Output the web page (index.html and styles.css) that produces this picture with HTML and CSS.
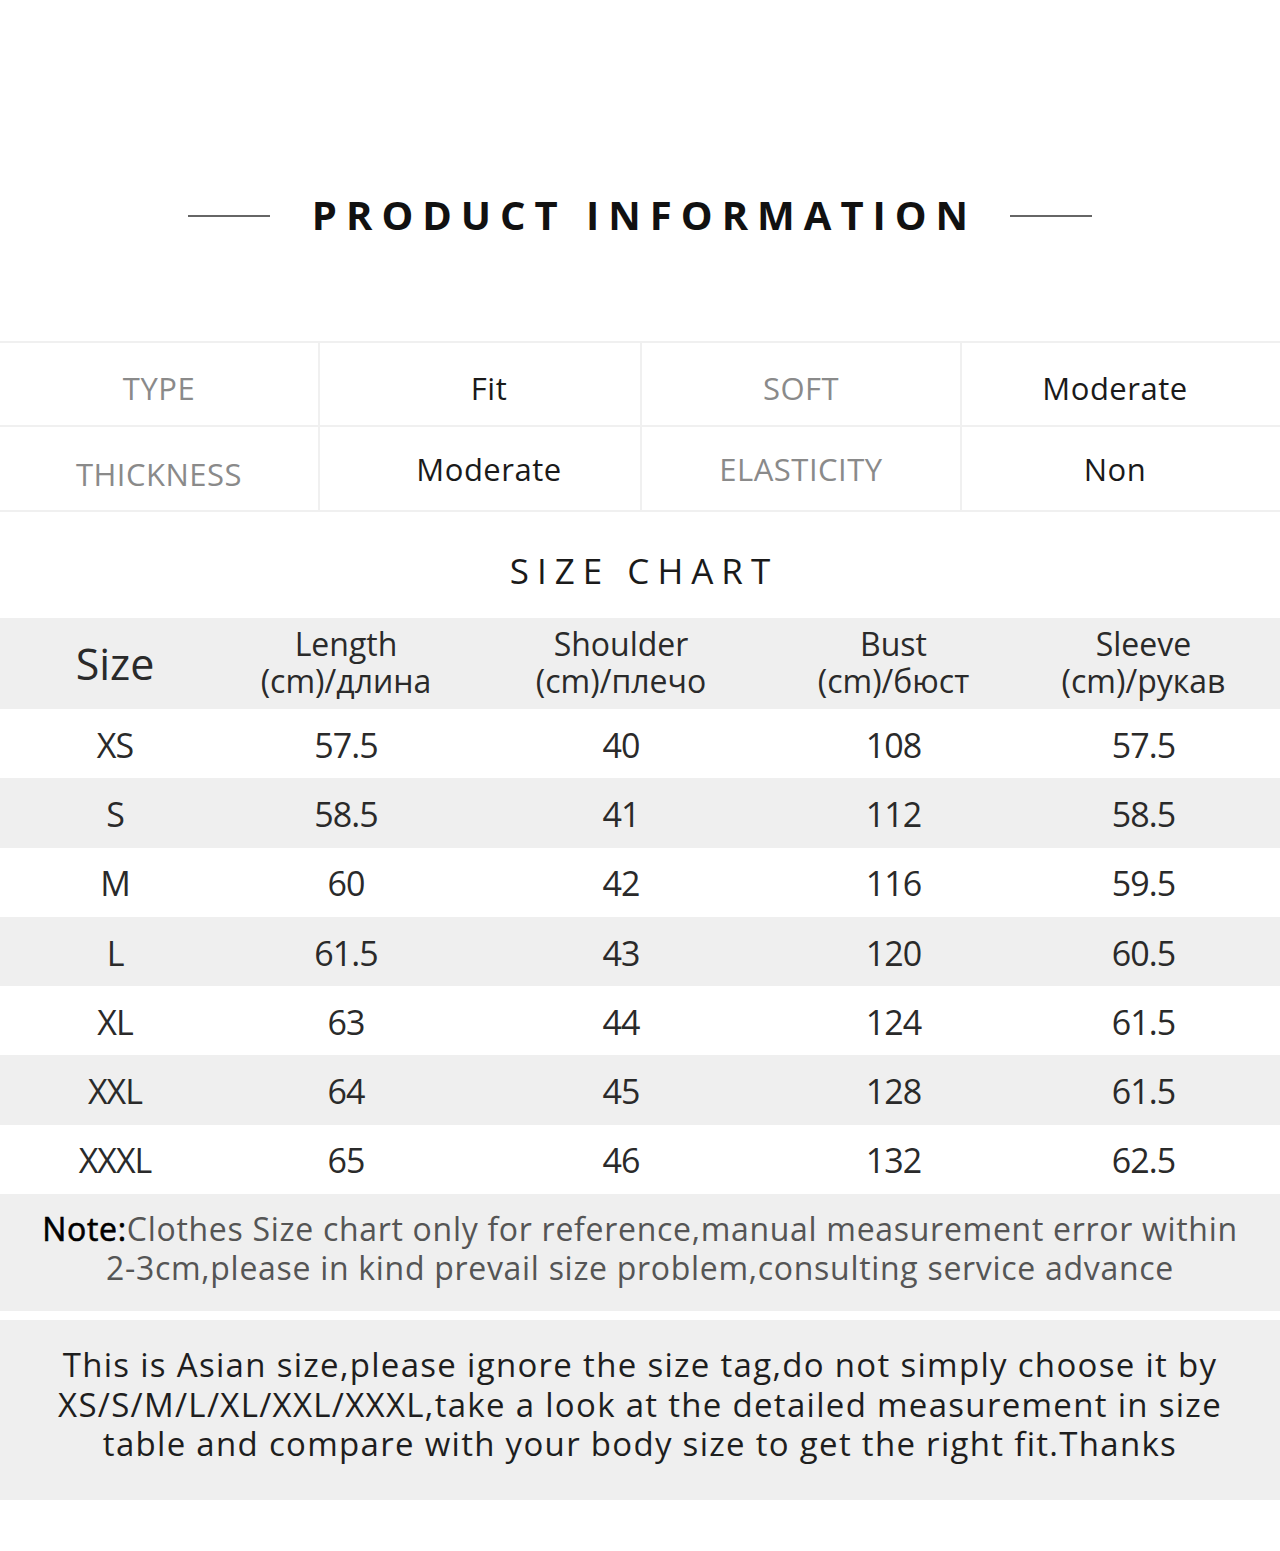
FILE: index.html
```html
<!DOCTYPE html>
<html lang="en">
<head>
<meta charset="utf-8">
<title>Product Information</title>
<link rel="stylesheet" href="styles.css">
</head>
<body>
<main class="page">
  <header class="title-band">
    <span class="rule"></span>
    <h1 class="title">PRODUCT INFORMATION</h1>
    <span class="rule"></span>
  </header>

  <section class="info">
    <div class="info-cell label">TYPE</div>
    <div class="info-cell value v2">Fit</div>
    <div class="info-cell label">SOFT</div>
    <div class="info-cell value v4">Moderate</div>
    <div class="info-cell label low">THICKNESS</div>
    <div class="info-cell value v2">Moderate</div>
    <div class="info-cell label">ELASTICITY</div>
    <div class="info-cell value v4">Non</div>
  </section>

  <h2 class="chart-title">SIZE CHART</h2>

  <section class="chart">
    <div class="row head">
      <div class="cell size-head">Size</div>
      <div class="cell">Length<br>(cm)/длина</div>
      <div class="cell">Shoulder<br>(cm)/плечо</div>
      <div class="cell">Bust<br>(cm)/бюст</div>
      <div class="cell">Sleeve<br>(cm)/рукав</div>
    </div>
    <div class="row"><div class="cell">XS</div><div class="cell">57.5</div><div class="cell">40</div><div class="cell">108</div><div class="cell">57.5</div></div>
    <div class="row alt"><div class="cell">S</div><div class="cell">58.5</div><div class="cell">41</div><div class="cell">112</div><div class="cell">58.5</div></div>
    <div class="row"><div class="cell">M</div><div class="cell">60</div><div class="cell">42</div><div class="cell">116</div><div class="cell">59.5</div></div>
    <div class="row alt"><div class="cell">L</div><div class="cell">61.5</div><div class="cell">43</div><div class="cell">120</div><div class="cell">60.5</div></div>
    <div class="row"><div class="cell">XL</div><div class="cell">63</div><div class="cell">44</div><div class="cell">124</div><div class="cell">61.5</div></div>
    <div class="row alt"><div class="cell">XXL</div><div class="cell">64</div><div class="cell">45</div><div class="cell">128</div><div class="cell">61.5</div></div>
    <div class="row"><div class="cell">XXXL</div><div class="cell">65</div><div class="cell">46</div><div class="cell">132</div><div class="cell">62.5</div></div>
  </section>

  <p class="note"><b>Note:</b>Clothes Size chart only for reference,manual measurement error within<br>2-3cm,please in kind prevail size problem,consulting service advance</p>

  <p class="asian">This is Asian size,please ignore the size tag,do not simply choose it by<br>XS/S/M/L/XL/XXL/XXXL,take a look at the detailed measurement in size<br>table and compare with your body size to get the right fit.Thanks</p>
</main>
</body>
</html>
```

FILE: styles.css
```css
* { box-sizing: border-box; }

html, body {
  margin: 0;
  padding: 0;
  background: #ffffff;
}

body {
  font-family: "Open Sans", "Noto Sans", "DejaVu Sans", sans-serif;
  color: #222;
}

.page {
  width: 1280px;
  height: 1551px;
  display: flex;
  flex-direction: column;
}

/* ---------- title ---------- */
.title-band {
  height: 341px;
  display: flex;
  justify-content: center;
  align-items: flex-start;
  padding-top: 189px;
  gap: 42px;
}

.rule {
  width: 82px;
  height: 2px;
  background: #666;
  margin-top: 26px;
}

.title {
  margin: 0;
  font-size: 40px;
  line-height: 52px;
  font-weight: 700;
  letter-spacing: 9px;
  margin-right: -9px;
  color: #111;
}

/* ---------- info table ---------- */
.info {
  display: grid;
  grid-template-columns: 320px 322px 320px 318px;
  grid-template-rows: 84px 83px;
  border-top: 2px solid #f0f0f0;
  border-bottom: 2px solid #f0f0f0;
}

.info-cell {
  display: flex;
  align-items: center;
  justify-content: center;
  font-size: 31px;
  letter-spacing: 0.5px;
  border-right: 2px solid #f0f0f0;
  border-bottom: 2px solid #f0f0f0;
  padding-top: 8px;
}

.info-cell:nth-child(4n) { border-right: none; }
.info-cell:nth-child(n+5) { border-bottom: none; padding-top: 0; }

.info-cell.label { color: #8a8a8a; }
.info-cell.value { color: #1a1a1a; }
.info-cell.low { padding-top: 10px; }
.info-cell.v2 { padding-left: 18px; }
.info-cell.v4 { padding-right: 12px; }

/* ---------- size chart ---------- */
.chart-title {
  margin: 0;
  height: 106px;
  display: flex;
  align-items: center;
  justify-content: center;
  padding-top: 10px;
  padding-left: 8px;
  font-size: 35px;
  font-weight: 400;
  letter-spacing: 8px;
  color: #1a1a1a;
}

.chart {
  display: flex;
  flex-direction: column;
}

.row {
  display: grid;
  grid-template-columns: 230px 232px 318px 227px 273px;
  height: 69.3px;
  align-items: center;
}

.row.head {
  height: 91px;
  background: #efefef;
}

.row.alt { background: #efefef; }

.cell {
  text-align: center;
  font-size: 34px;
  letter-spacing: -1px;
  line-height: 37px;
  color: #2a2a2a;
  padding-top: 3px;
}

.row.head .cell {
  font-size: 32px;
  letter-spacing: 0;
  padding-top: 0;
  padding-bottom: 4px;
}

.row.head .cell.size-head {
  font-size: 43px;
  padding-bottom: 0;
}

/* ---------- notes ---------- */
.note {
  margin: 0;
  height: 117px;
  background: #efefef;
  text-align: center;
  font-size: 32px;
  letter-spacing: 0.7px;
  line-height: 39px;
  color: #555;
  padding-top: 15px;
}

.note b {
  font-weight: 400;
  color: #000;
  -webkit-text-stroke: 0.6px #000;
}

.asian {
  margin: 9px 0 0;
  height: 180px;
  background: #efefef;
  text-align: center;
  font-size: 33px;
  letter-spacing: 1.3px;
  line-height: 39.5px;
  color: #1e1e1e;
  padding-top: 25px;
}
```
